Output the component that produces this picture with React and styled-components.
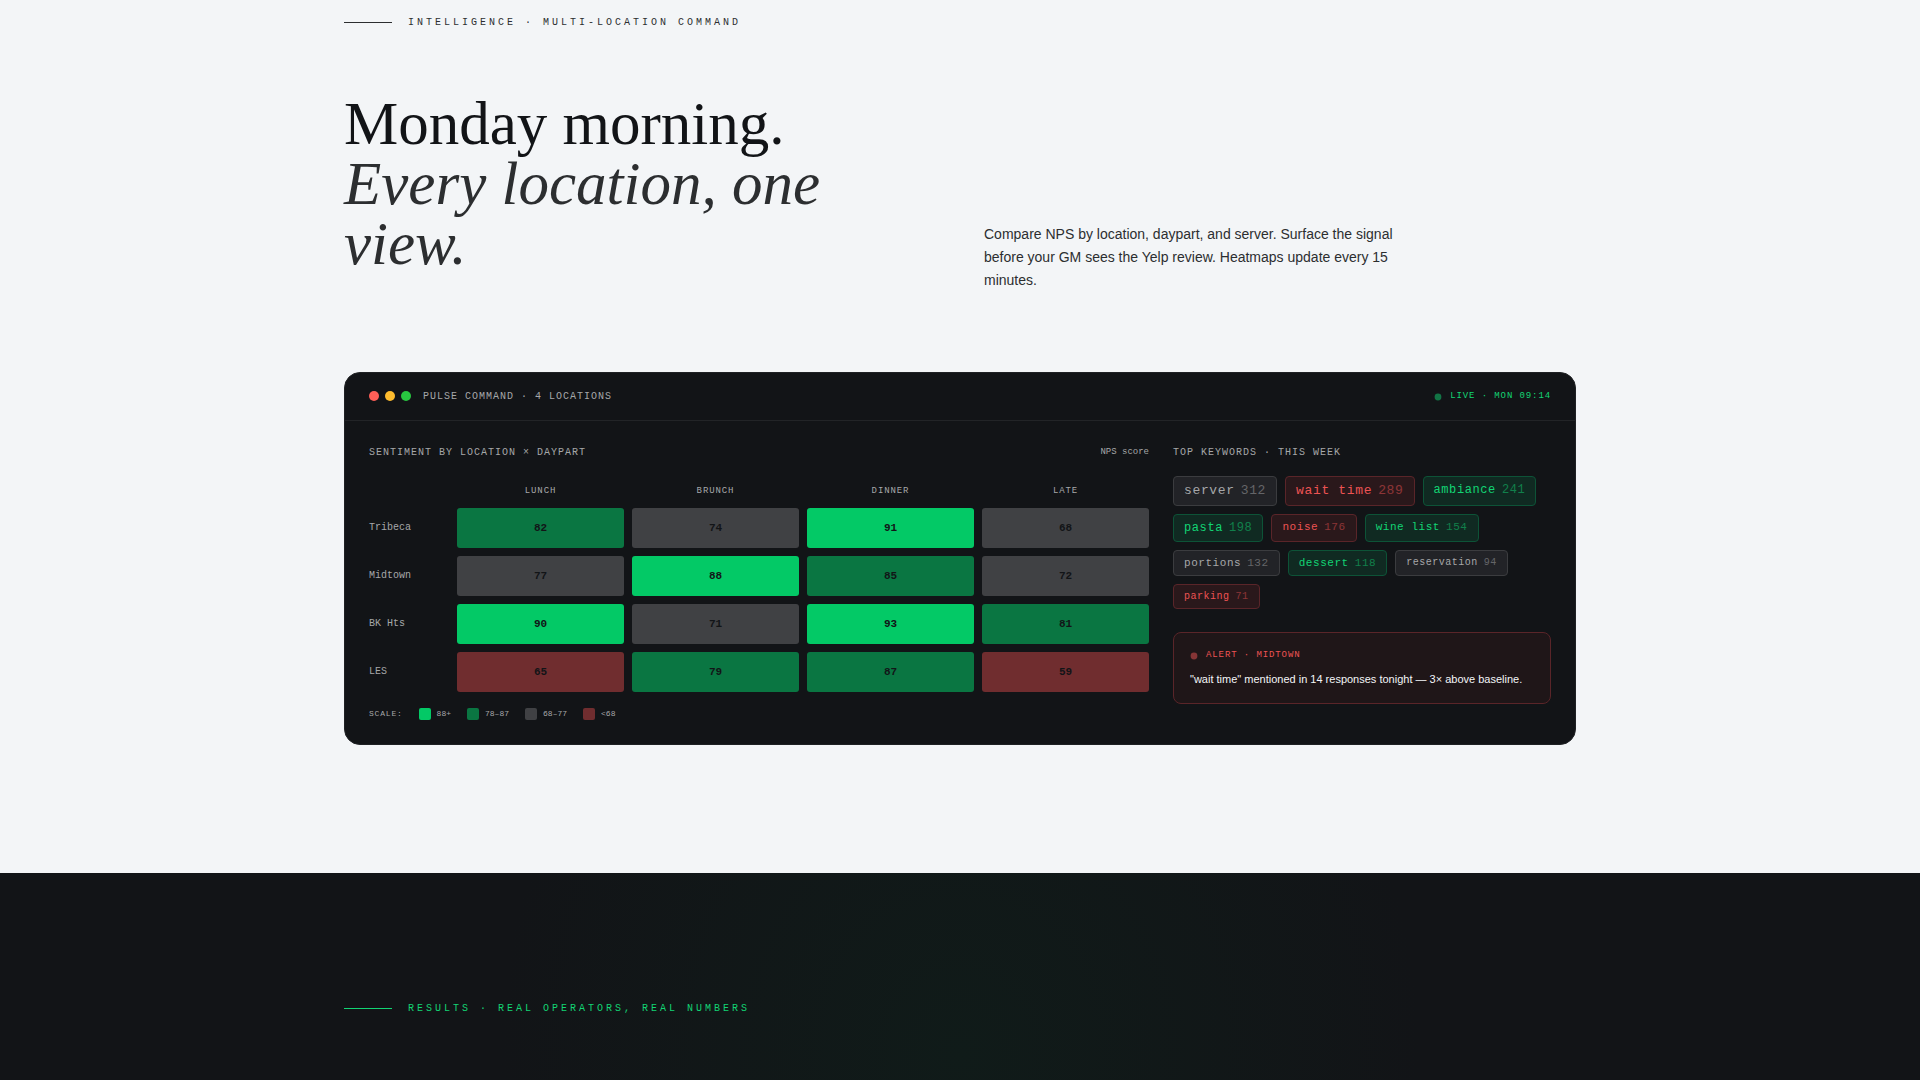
import React from 'react'
import styled, { createGlobalStyle, css } from 'styled-components';

const mono = `"Liberation Mono", "Courier New", monospace`
const sans = `"Liberation Sans", Arial, sans-serif`
const serif = `"Liberation Serif", "Times New Roman", serif`

const accent = '#12d474'
const danger = '#ed5353'

const heatColors = {
    top: '#03c966',
    good: '#0a7642',
    mid: '#404144',
    low: '#702d2f',
}

const tagTones = {
    neutral: css`
    color: #a6a7a9;
    background: #222327;
    border-color: #3b3c3f;
    `,
    bad: css`
    color: ${danger};
    background: #2a181b;
    border-color: #5a2529;
    `,
    good: css`
    color: ${accent};
    background: #102a22;
    border-color: #0d5337;
    `,
}

const GlobalStyle = createGlobalStyle`
* {
    box-sizing: border-box;
    margin: 0;
    padding: 0;
}

body {
    font-family: ${sans};
    line-height: 1.5;
    background: #f3f5f7;
    color: #121417;
}
`

const Page = styled.main`
min-height: 100vh;
display: flex;
flex-direction: column;
`

const Container = styled.div`
max-width: 1280px;
margin: 0 auto;
padding: 0 24px;
`

const IntelSection = styled.section`
padding: 15px 0 128px;
`

const ResultsSection = styled.section`
flex: 1;
padding: 128px 0 64px;
background: radial-gradient(ellipse 460px 520px at 50% 180px, #101b19 0%, #121417 100%) #121417;
`

const Eyebrow = styled.p`
display: flex;
align-items: center;
gap: 16px;
font-family: ${mono};
font-size: 10px;
letter-spacing: 0.3em;
text-transform: uppercase;
color: ${({ $green }) => ($green ? accent : '#2c2e30')};

&::before {
    content: '';
    width: 48px;
    height: 1px;
    background: currentColor;
}
`

const Intro = styled.div`
display: grid;
grid-template-columns: 1fr 1fr;
gap: 48px;
align-items: end;
margin: 64px 0 80px;

@media screen and (max-width: 900px) {
    grid-template-columns: 1fr;
}
`

const Heading = styled.h2`
padding-bottom: 18px;
font-family: ${serif};
font-size: 61px;
font-weight: 400;
line-height: 60px;

em {
    color: #2c2e30;
}
`

const IntroText = styled.p`
max-width: 420px;
font-size: 14px;
line-height: 23px;
color: #2c2e30;
`

const Card = styled.div`
background: #121417;
border: 1px solid #1f2124;
border-radius: 16px;
overflow: hidden;
`

const CardHeader = styled.header`
display: flex;
align-items: center;
justify-content: space-between;
padding: 16px 24px;
border-bottom: 1px solid #222427;
`

const WindowTitle = styled.div`
display: flex;
align-items: center;
gap: 12px;
`

const Lights = styled.div`
display: flex;
gap: 6px;
padding-bottom: 1px;
`

const Light = styled.span`
width: 10px;
height: 10px;
border-radius: 50%;
background: ${({ $color }) => $color};
`

const Label = styled.h3`
font-family: ${mono};
font-size: 10px;
font-weight: 400;
letter-spacing: 0.1em;
text-transform: uppercase;
color: #a6a7a9;
`

const Status = styled.p`
display: flex;
align-items: center;
gap: 8px;
font-family: ${mono};
font-size: 9px;
letter-spacing: 0.1em;
text-transform: uppercase;
color: ${({ $color }) => $color};

&::before {
    content: '';
    width: 8px;
    height: 8px;
    border-radius: 50%;
    background: currentColor;
    opacity: 0.5;
    transform: scale(0.85);
}
`

const CardBody = styled.div`
display: grid;
grid-template-columns: repeat(12, 1fr);
gap: 24px;
padding: 24px;
`

const Panel = styled.section`
grid-column: span ${({ $span }) => $span};

@media screen and (max-width: 900px) {
    grid-column: span 12;
}
`

const PanelHead = styled.div`
display: flex;
align-items: center;
justify-content: space-between;
margin-bottom: 16px;
`

const Unit = styled.span`
font-family: ${mono};
font-size: 9px;
color: #a6a7a9;
`

/* the outer border-spacing is pulled back so the cells line up with the panel */
const HeatTable = styled.table`
width: calc(100% + 16px);
margin: 0 -8px -8px;
table-layout: fixed;
border-collapse: separate;
border-spacing: 8px;
font-family: ${mono};
`

const LabelCol = styled.col`
width: 80px;
`

const DayHead = styled.th`
padding-bottom: 2px;
font-size: 9px;
font-weight: 400;
line-height: 14px;
letter-spacing: 0.1em;
text-transform: uppercase;
color: #a6a7a9;
`

const PlaceHead = styled.th`
padding-bottom: 2px;
font-size: 10px;
font-weight: 400;
text-align: left;
color: #a6a7a9;
`

const HeatCell = styled.td`
height: 40px;
border-radius: 3px;
background: ${({ $level }) => heatColors[$level]};
font-size: 11px;
font-weight: 700;
text-align: center;
color: #121417;
`

const Legend = styled.div`
display: flex;
align-items: center;
gap: 16px;
margin-top: 16px;
font-family: ${mono};
font-size: 8px;
color: #a6a7a9;
`

const LegendTitle = styled.span`
letter-spacing: 0.1em;
text-transform: uppercase;
`

const LegendItem = styled.span`
display: flex;
align-items: center;
gap: 6px;
`

const Swatch = styled.span`
width: 12px;
height: 12px;
border-radius: 2px;
background: ${({ $level }) => heatColors[$level]};
`

const Tags = styled.ul`
display: flex;
flex-wrap: wrap;
gap: 8px;
list-style: none;
font-family: ${mono};
`

const Tag = styled.li`
padding: 4px 10px;
border: 1px solid;
border-radius: 4px;
letter-spacing: 0.05em;
${({ $tone }) => tagTones[$tone]}
`

const Count = styled.span`
margin-left: 6px;
opacity: 0.5;
`

const Alert = styled.div`
margin-top: 23px;
padding: 16px;
border: 1px solid #5a2529;
border-radius: 8px;
background: #1f1618;
`

const AlertText = styled.p`
margin-top: 8px;
font-size: 11px;
line-height: 16px;
color: #f3f5f7;
`

const dayparts = ['Lunch', 'Brunch', 'Dinner', 'Late']

const locations = [
    { name: 'Tribeca', scores: [82, 74, 91, 68] },
    { name: 'Midtown', scores: [77, 88, 85, 72] },
    { name: 'BK Hts', scores: [90, 71, 93, 81] },
    { name: 'LES', scores: [65, 79, 87, 59] },
]

const legend = [
    { level: 'top', text: '88+' },
    { level: 'good', text: '78–87' },
    { level: 'mid', text: '68–77' },
    { level: 'low', text: '<68' },
]

const keywords = [
    { word: 'server', count: 312, tone: 'neutral' },
    { word: 'wait time', count: 289, tone: 'bad' },
    { word: 'ambiance', count: 241, tone: 'good' },
    { word: 'pasta', count: 198, tone: 'good' },
    { word: 'noise', count: 176, tone: 'bad' },
    { word: 'wine list', count: 154, tone: 'good' },
    { word: 'portions', count: 132, tone: 'neutral' },
    { word: 'dessert', count: 118, tone: 'good' },
    { word: 'reservation', count: 94, tone: 'neutral' },
    { word: 'parking', count: 71, tone: 'bad' },
]

const maxCount = Math.max(...keywords.map((k) => k.count))

const tagSize = (count) => Math.round(9 + (count / maxCount) * 4)

const levelOf = (score) => {
    if (score >= 88) return 'top'
    if (score >= 78) return 'good'
    if (score >= 68) return 'mid'
    return 'low'
}

const Heatmap = () => {
    return (
        <Panel $span={8}>
            <PanelHead>
                <Label>Sentiment by location × daypart</Label>
                <Unit>NPS score</Unit>
            </PanelHead>
            <HeatTable>
                <colgroup>
                    <LabelCol />
                    {dayparts.map((day) => <col key={day} />)}
                </colgroup>
                <thead>
                    <tr>
                        <td />
                        {dayparts.map((day) => <DayHead key={day} scope="col">{day}</DayHead>)}
                    </tr>
                </thead>
                <tbody>
                    {locations.map(({ name, scores }) => (
                        <tr key={name}>
                            <PlaceHead scope="row">{name}</PlaceHead>
                            {scores.map((score, i) => (
                                <HeatCell key={dayparts[i]} $level={levelOf(score)}>{score}</HeatCell>
                            ))}
                        </tr>
                    ))}
                </tbody>
            </HeatTable>
            <Legend>
                <LegendTitle>Scale:</LegendTitle>
                {legend.map(({ level, text }) => (
                    <LegendItem key={level}>
                        <Swatch $level={level} />
                        {text}
                    </LegendItem>
                ))}
            </Legend>
        </Panel>
    )
}

const Keywords = () => {
    return (
        <Panel $span={4}>
            <PanelHead>
                <Label>Top keywords · this week</Label>
            </PanelHead>
            <Tags>
                {keywords.map(({ word, count, tone }) => (
                    <Tag key={word} $tone={tone} style={{ fontSize: tagSize(count) }}>
                        {word}<Count>{count}</Count>
                    </Tag>
                ))}
            </Tags>
            <Alert role="alert">
                <Status $color={danger}>Alert · Midtown</Status>
                <AlertText>"wait time" mentioned in 14 responses tonight — 3× above baseline.</AlertText>
            </Alert>
        </Panel>
    )
}

const App = () => {
    return (
        <Page>
            <GlobalStyle />
            <IntelSection>
                <Container>
                    <Eyebrow>Intelligence · Multi-location command</Eyebrow>
                    <Intro>
                        <Heading>
                            Monday morning.<br />
                            <em>Every location, one view.</em>
                        </Heading>
                        <IntroText>
                            Compare NPS by location, daypart, and server. Surface the signal before
                            your GM sees the Yelp review. Heatmaps update every 15 minutes.
                        </IntroText>
                    </Intro>
                    <Card>
                        <CardHeader>
                            <WindowTitle>
                                <Lights>
                                    <Light $color="#ff5f57" />
                                    <Light $color="#febc2e" />
                                    <Light $color="#28c840" />
                                </Lights>
                                <Label>Pulse command · 4 locations</Label>
                            </WindowTitle>
                            <Status $color={accent}>Live · Mon 09:14</Status>
                        </CardHeader>
                        <CardBody>
                            <Heatmap />
                            <Keywords />
                        </CardBody>
                    </Card>
                </Container>
            </IntelSection>
            <ResultsSection>
                <Container>
                    <Eyebrow $green>Results · Real operators, real numbers</Eyebrow>
                </Container>
            </ResultsSection>
        </Page>
    )
}

export default App
